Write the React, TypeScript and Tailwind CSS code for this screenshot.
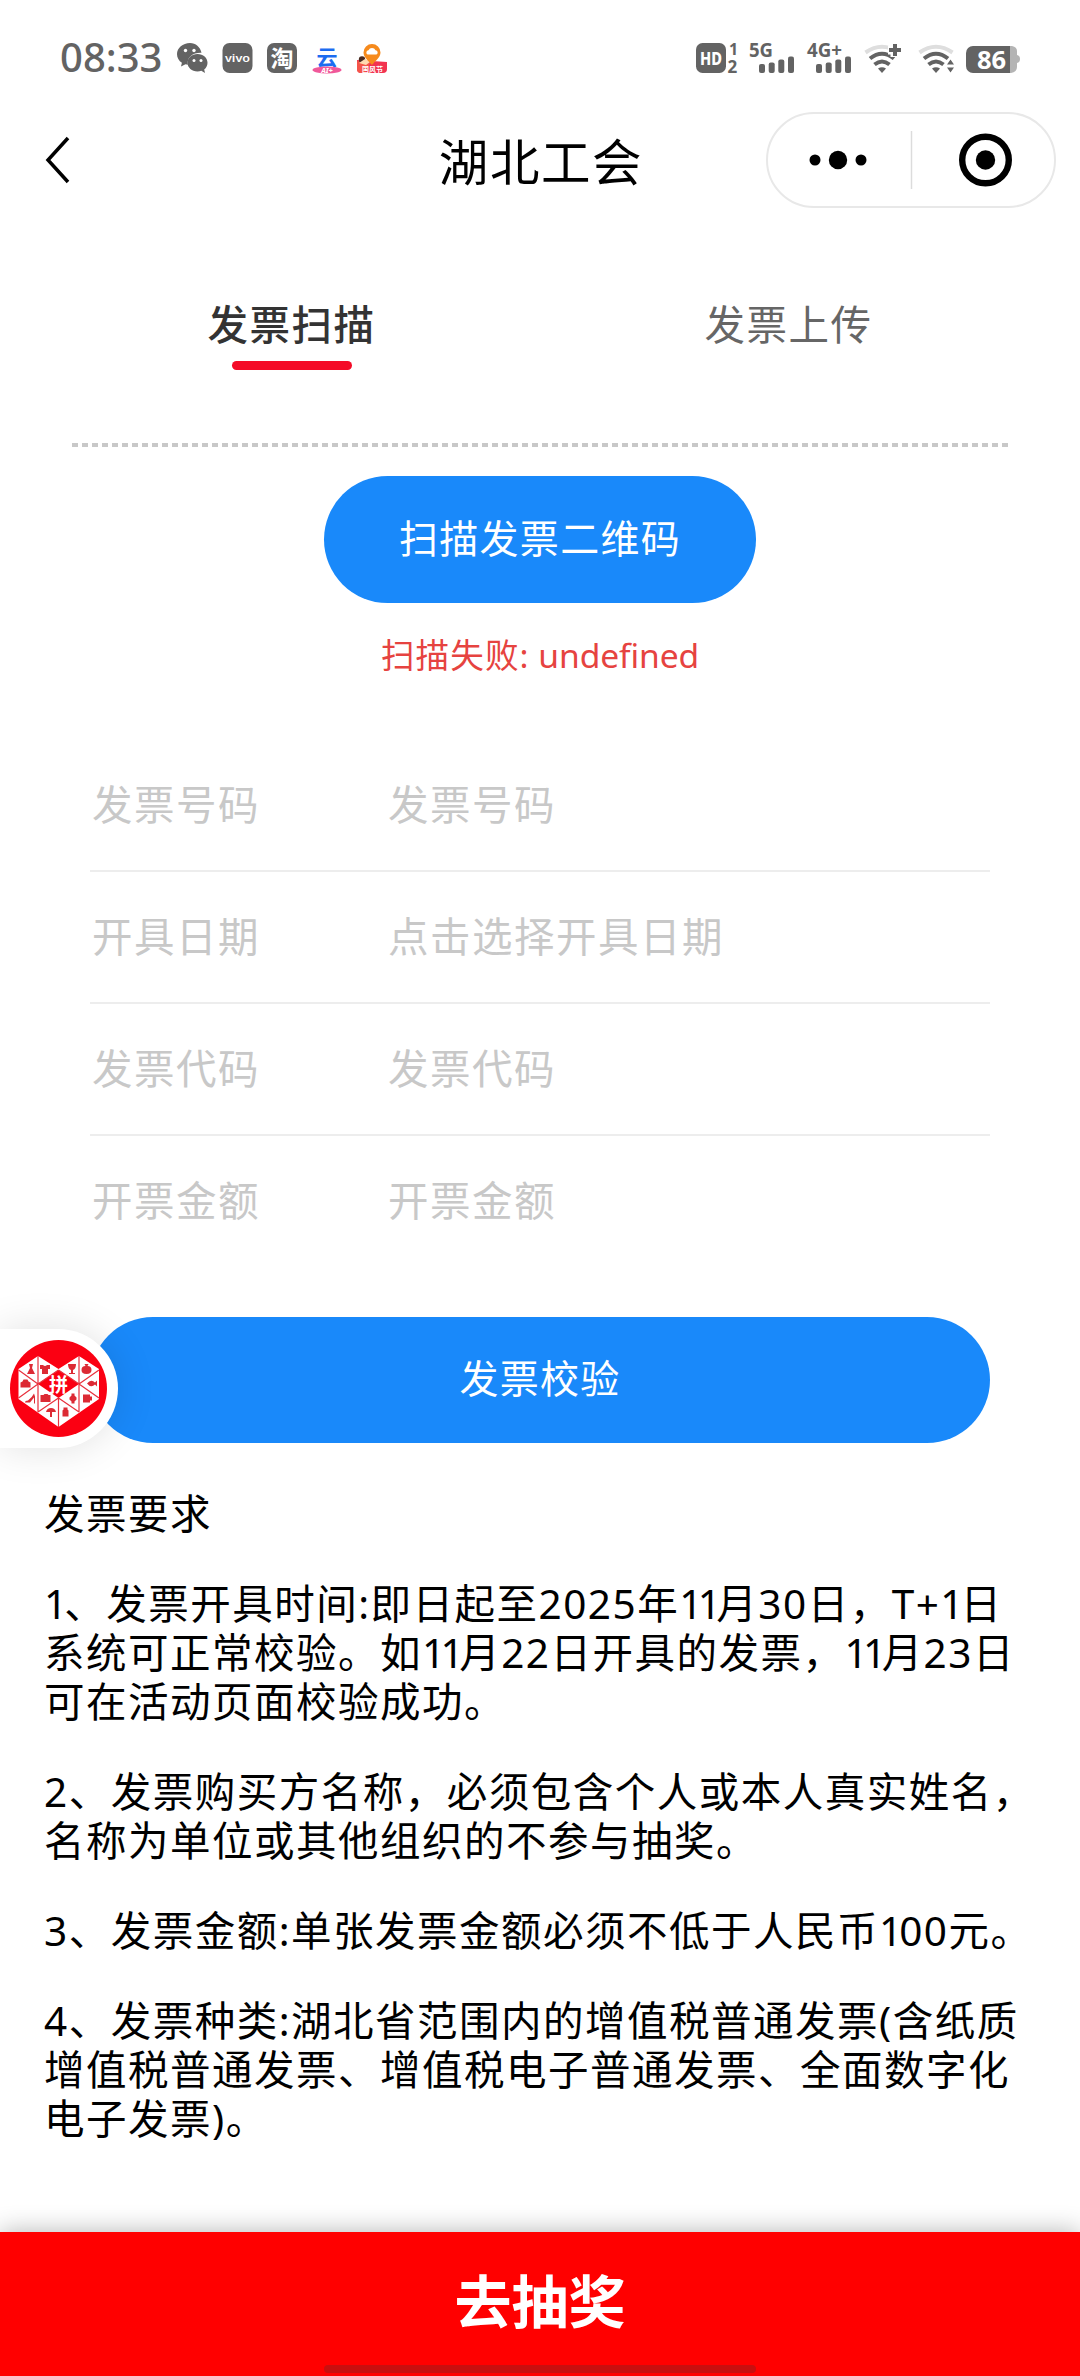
import React from "react";

const fields = [
  { label: "发票号码", placeholder: "发票号码" },
  { label: "开具日期", placeholder: "点击选择开具日期" },
  { label: "发票代码", placeholder: "发票代码" },
  { label: "开票金额", placeholder: "开票金额" },
];

const rules = [
  ["发票要求"],
  [
    "1、发票开具时间:即日起至2025年11月30日，T+1日",
    "系统可正常校验。如11月22日开具的发票，11月23日",
    "可在活动页面校验成功。",
  ],
  ["2、发票购买方名称，必须包含个人或本人真实姓名，", "名称为单位或其他组织的不参与抽奖。"],
  ["3、发票金额:单张发票金额必须不低于人民币100元。"],
  [
    "4、发票种类:湖北省范围内的增值税普通发票(含纸质",
    "增值税普通发票、增值税电子普通发票、全面数字化",
    "电子发票)。",
  ],
];

function StatusIconsLeft() {
  return (
    <svg width="216" height="32" viewBox="0 0 216 32" className="ml-[15px] overflow-visible">
      {/* WeChat */}
      <g fill="#636363">
        <path d="M13 0C5.800 0 0 5 0 11.200c0 3.500 1.900 6.600 4.900 8.600L4 23.500l4.500-2.300c1 .3 1.600.4 2.300.5C9.600 14 16 9.500 24.500 9.800 23.300 4 18.700 0 13 0Z" />
        <path d="M20.500 11c-5.700 0-10 3.900-10 8.700s4.300 8.700 10 8.700c1.400 0 2.600-.2 3.800-.6L28 30l-.8-3.400c2.100-1.700 3.300-4.100 3.300-6.900 0-4.800-4.300-8.700-10-8.700Z" />
      </g>
      <g fill="#fff">
        <circle cx="8.500" cy="7.500" r="1.700" />
        <circle cx="17" cy="7.500" r="1.700" />
        <circle cx="17" cy="17.500" r="1.500" />
        <circle cx="24" cy="17.500" r="1.500" />
      </g>
      {/* vivo */}
      <rect x="45.500" y="0" width="30" height="30" rx="7" fill="#636363" />
      <text x="60.500" y="18.500" textAnchor="middle" fontSize="10.500" fontWeight="600" fill="#fff" textLength="25" lengthAdjust="spacingAndGlyphs">
        vivo
      </text>
      {/* Taobao */}
      <rect x="90" y="0" width="30" height="30" rx="7" fill="#636363" />
      <text x="105" y="23.500" textAnchor="middle" fontSize="23" fontWeight="700" fill="#fff">
        淘
      </text>
      {/* Cloud */}
      <text x="150" y="21.500" textAnchor="middle" fontSize="21" fontWeight="700" fill="#1c6cf0">
        云
      </text>
      <ellipse cx="150" cy="27" rx="14.500" ry="3.400" fill="#f0589a" />
      <text x="150" y="29.500" textAnchor="middle" fontSize="7" fontWeight="800" fontStyle="italic" fill="#fff">
        AI+
      </text>
      {/* Map pin */}
      <path d="M180 17l30 2v7a4 4 0 0 1-4 4h-22a4 4 0 0 1-4-4Z" fill="#f23350" />
      <path d="M180 18l13 2-5 10h-4a4 4 0 0 1-4-4Z" fill="#f5554a" />
      <circle cx="185" cy="16.500" r="3.200" fill="#4a2a20" />
      <path d="M182 20l6-4 5 3-4 3Z" fill="#ffd9b0" />
      <path d="M195 1a8.500 8.500 0 0 0-8.500 8.500c0 5 5 8 8.500 12.500 3.500-4.500 8.500-7.500 8.500-12.500A8.500 8.500 0 0 0 195 1Z" fill="#f68a1c" />
      <path d="M190.500 11.500a2.300 2.300 0 0 1 1-4.300 3.800 3.800 0 0 1 7 0 2.300 2.300 0 0 1 1 4.300Z" fill="#fff" />
      <text x="195.500" y="28.500" textAnchor="middle" fontSize="7" fontWeight="700" fill="#fff">
        国风节
      </text>
    </svg>
  );
}

function SignalBars({ x }: { x: number }) {
  return (
    <g fill="#636363">
      <rect x={x} y="21" width="6" height="9" rx="2" />
      <rect x={x + 9.7} y="19.500" width="6" height="10.500" rx="2" />
      <rect x={x + 19.300} y="16.500" width="6" height="13.500" rx="2" />
      <rect x={x + 29} y="13.500" width="6" height="16.500" rx="2" />
    </g>
  );
}

function Wifi({ x }: { x: number }) {
  return (
    <g fill="none" strokeWidth="4">
      <path d={`M${x - 16.500} 9.500Q${x} -2 ${x + 16.500} 9.500`} stroke="#dedede" />
      <path d={`M${x - 12} 15.500Q${x} 6 ${x + 12} 15.500`} stroke="#636363" />
      <path d={`M${x - 7.500} 21.500Q${x} 15.500 ${x + 7.500} 21.500`} stroke="#636363" />
      <path d={`M${x - 4} 25.500Q${x} 23 ${x + 4} 25.500L${x} 30Z`} fill="#636363" stroke="none" />
    </g>
  );
}

function StatusIconsRight() {
  return (
    <svg width="326" height="32" viewBox="0 0 326 32" className="ml-auto overflow-visible">
      <rect x="0" y="0" width="30" height="30" rx="6.500" fill="#636363" />
      <text x="15" y="21.500" textAnchor="middle" fontSize="18" fontWeight="800" fill="#fff" textLength="22" lengthAdjust="spacingAndGlyphs">
        HD
      </text>
      <g fill="#636363" fontWeight="700">
        <text x="33" y="12" fontSize="16">1</text>
        <text x="31.500" y="29.500" fontSize="17">2</text>
        <text x="53" y="14" fontSize="19" textLength="24" lengthAdjust="spacingAndGlyphs">5G</text>
        <text x="111" y="14" fontSize="19" textLength="35" lengthAdjust="spacingAndGlyphs">4G+</text>
      </g>
      <SignalBars x={63} />
      <SignalBars x={120} />
      <Wifi x={186} />
      <path d="M199 0v14M192 7h14" stroke="#fff" strokeWidth="9" fill="none" />
      <path d="M199 1v12M193 7h12" stroke="#636363" strokeWidth="4" fill="none" />
      <Wifi x={240} />
      <path d="M254.500 13l6 9.500-6 9.500-6-9.500Z" fill="#fff" />
      <path d="M254.500 16.500l3.500 5h-7ZM254.500 29.500l3.500-5h-7Z" fill="#636363" />
      <path d="M314 3h2q5 1 5 5v4q3 .5 3 4t-3 4v4q0 5-6 6h-3Z" fill="#b4b4b4" />
      <path d="M277 3h37v27h-37a7 7 0 0 1-7-7V10a7 7 0 0 1 7-7Z" fill="#636363" />
      <text x="295.500" y="25.500" textAnchor="middle" fontSize="25.500" fontWeight="700" fill="#fff">
        86
      </text>
    </svg>
  );
}

function StatusBar() {
  return (
    <header className="flex h-[100px] items-start pl-[60px] pr-[58px] pt-[43px]">
      <span className="-mt-[2px] text-[40px] font-medium leading-[32px] text-[#636363]">08:33</span>
      <StatusIconsLeft />
      <StatusIconsRight />
    </header>
  );
}

function NavBar() {
  return (
    <nav className="flex h-[120px] items-center justify-between pl-[44px] pr-[24px]">
      <svg width="28" height="48" viewBox="0 0 28 48">
        <path d="M24 2L4 24l20 22" fill="none" stroke="#000" strokeWidth="3.500" />
      </svg>
      <h1 className="ml-[244px] pt-[3px] text-[49.5px] leading-[60px] tracking-[1.6px] text-black">湖北工会</h1>
      <div className="flex h-[96px] w-[290px] items-center rounded-full border-2 border-[#e8e8e8]">
        <svg width="286" height="60" viewBox="0 0 286 60">
          <circle cx="47" cy="30" r="5.500" />
          <circle cx="70" cy="30" r="9.200" />
          <circle cx="93" cy="30" r="5.500" />
          <path d="M143.500 1v58" stroke="#dcdcdc" strokeWidth="1.500" />
          <circle cx="217.500" cy="30" r="23.300" fill="none" stroke="#000" strokeWidth="6.400" />
          <circle cx="217.500" cy="30" r="9.700" />
        </svg>
      </div>
    </nav>
  );
}

function Tabs() {
  return (
    <div className="mx-[43px] grid h-[223px] grid-cols-2 pt-[75px] text-center text-[40.5px] leading-[60px] tracking-[1.5px]">
      <div className="flex flex-col items-center gap-[6px] font-medium text-[#333]">
        <span>发票扫描</span>
        <i className="h-[9px] w-[120px] rounded-full bg-[#f40b27]" />
      </div>
      <span className="text-[#666]">发票上传</span>
    </div>
  );
}

// Goods shown in the triangles of the heart badge
const goods = [
  { name: "dress", x: 31, y: 40, d: "M-2-5h4l-1 4 3 6h-8l3-6Z" },
  { name: "shirt", x: 45, y: 40, d: "M-5-4h3q2 2 4 0h3v4h-2v5h-6v-5h-2Z" },
  { name: "glass", x: 72, y: 40, d: "M-4-5h8q0 5-3 6v3h2v1h-6v-1h2v-3q-3-1-3-6Z" },
  { name: "fruit", x: 86.5, y: 40, d: "M-2-5h4l-1 2q4 0 4 4t-5 4-5-4 4-4Z" },
  { name: "bag", x: 25.5, y: 54.5, d: "M-2-4h4l1 2 2 1v5h-10v-5l2-1Z" },
  { name: "fish", x: 92, y: 54.5, d: "M-5 0q4-5 8-1l2-2v6l-2-2q-4 4-8-1Z" },
  { name: "heel", x: 31, y: 69.5, d: "M3-5l1 3v7h-1v-6l-4 5h-5q0-2 3-2 4-3 6-7Z" },
  { name: "camera", x: 45.5, y: 69, d: "M-5-3h3l1-1h3l1 1h2v7h-10Z" },
  { name: "watch", x: 73, y: 69.5, d: "M-1.500-5h3v2l2 2v2l-2 2v2h-3v-2l-2-2v-2l2-2Z" },
  { name: "mug", x: 87, y: 69.5, d: "M-4-4h7v2h2v4h-2v2h-7Z" },
  { name: "umbrella", x: 51, y: 83, d: "M-5 0q1-4 5-4t5 4h-4v5h-2v-5Z" },
  { name: "bottle", x: 65.5, y: 83.5, d: "M-2-5h4v2l1 1v6h-6v-6l1-1Z" },
];

function FloatingBadge() {
  return (
    <div className="absolute bottom-[-5px] left-0 h-[119px] w-[118px] rounded-r-full bg-white shadow-[0_0_40px_rgba(0,0,0,0.12)]">
      <svg width="118" height="119" viewBox="0 0 118 119">
        <circle cx="58.500" cy="59.500" r="48.500" fill="#fb0012" />
        <path d="M38 27l20.500 13L79 27l20 13v30L58.500 98 18.500 70V40Z" fill="#fff" />
        <path d="M38 55L58.500 41 79 55 58.500 69Z" fill="#fb0012" />
        <path
          d="M38 27v56M79 27v56M58.500 69v29M18.500 41L38 55 18.500 69M99 41L79 55l20 14M38 55l20.500-14M58.500 41L79 55M38 83l20.500-14L79 83"
          fill="none"
          stroke="#e8303c"
          strokeWidth="1.200"
        />
        {goods.map((g) => (
          <path key={g.name} transform={`translate(${g.x} ${g.y})`} d={g.d} fill="#dc2a34" />
        ))}
        <text x="58.500" y="62.500" textAnchor="middle" fontSize="19" fontWeight="700" fill="#fff">
          拼
        </text>
      </svg>
    </div>
  );
}

// "1" is set tighter than the other digits
function RuleLine({ text }: { text: string }) {
  return (
    <span className="block h-[48.6px] whitespace-nowrap">
      {text.split(/(1+)/).map((part, i) =>
        part.startsWith("1") ? (
          <span key={i} className={part === "11" ? "tracking-[-4.6px]" : "tracking-[-3px]"}>
            {part}
          </span>
        ) : (
          part
        )
      )}
    </span>
  );
}

export default function App() {
  return (
    <div
      lang="zh-CN"
      className="flex h-[2376px] w-[1080px] flex-col overflow-hidden bg-white font-['Noto_Sans','Noto_Sans_CJK_SC',sans-serif]"
    >
      <StatusBar />
      <NavBar />
      <Tabs />

      <main className="flex flex-col">
        <div className="mx-[72px] h-[4px] bg-[repeating-linear-gradient(90deg,#c8c8c8_0_6px,transparent_6px_10px)]" />
        <button
          type="button"
          className="mt-[29px] h-[127px] w-[432px] self-center rounded-full bg-[#1989fa] pb-[3px] text-[39px] tracking-[1.3px] text-white"
        >
          扫描发票二维码
        </button>
        <p className="mt-[29px] h-[108px] text-center text-[33.6px] leading-[46px] tracking-[1.1px] text-[#e64340]">
          扫描失败:<span className="tracking-[-0.1px]"> undefined</span>
        </p>

        <div className="mx-[90px]">
          {fields.map((f) => (
            <div
              key={f.label}
              className="flex h-[132px] items-center border-b-2 border-[#ededed] pl-[2px] pt-[1px] text-[40.5px] tracking-[1.5px] text-[#c8c8c8] last:border-transparent"
            >
              <span className="w-[296px]">{f.label}</span>
              <span>{f.placeholder}</span>
            </div>
          ))}
        </div>

        <div className="relative mt-[49px] px-[90px]">
          <button
            type="button"
            className="block h-[126px] w-full rounded-full bg-[#1989fa] pb-[3px] text-[39px] tracking-[1.3px] text-white"
          >
            发票校验
          </button>
          <FloatingBadge />
        </div>

        <section className="flex flex-col gap-[41.8px] pl-[44px] pt-[47px] text-[40.5px] leading-[48.6px] tracking-[1.5px] text-black">
          {rules.map((lines) => (
            <p key={lines[0]}>
              {lines.map((line) => (
                <RuleLine key={line} text={line} />
              ))}
            </p>
          ))}
        </section>
      </main>

      <footer className="mt-auto flex h-[144px] flex-col items-center justify-between bg-[#ff0000] pb-[3px] pt-[31px] shadow-[0_0_24px_rgba(0,0,0,0.3)]">
        <span className="text-[57px] font-bold leading-[76px] text-white">去抽奖</span>
        <i className="h-[8px] w-[432px] rounded-full bg-[#c80f0f]" />
      </footer>
    </div>
  );
}
